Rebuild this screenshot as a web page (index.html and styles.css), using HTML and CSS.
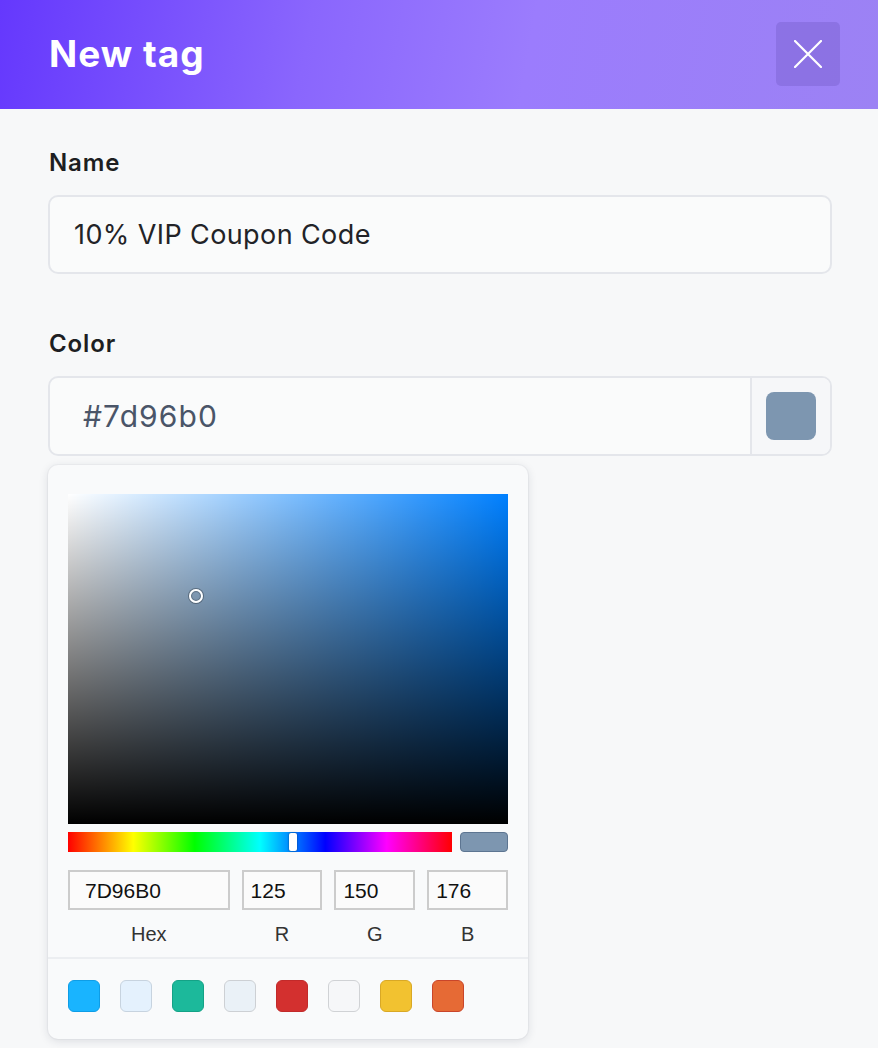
FILE: index.html
```html
<!DOCTYPE html>
<html lang="en">
<head>
<meta charset="utf-8">
<title>New tag</title>
<link rel="stylesheet" href="styles.css">
</head>
<body>
<header class="modal-header">
  <h1 class="title">New tag</h1>
  <button class="close" aria-label="Close">
    <svg width="28" height="28" viewBox="0 0 28 28"><path d="M1 1 L27 27 M27 1 L1 27" stroke="#fff" stroke-width="2.2" stroke-linecap="round" fill="none"/></svg>
  </button>
</header>
<main class="content">
  <div class="field">
    <label class="label">Name</label>
    <div class="input name-input">10% VIP Coupon Code</div>
  </div>
  <div class="field color-field">
    <label class="label">Color</label>
    <div class="input color-input">
      <span class="color-text">#7d96b0</span>
      <span class="color-side"><span class="color-chip"></span></span>
    </div>
    <div class="picker">
      <div class="saturation">
        <div class="sat-white"></div>
        <div class="sat-black"></div>
        <span class="pointer"></span>
      </div>
      <div class="hue-row">
        <div class="hue"><span class="hue-thumb"></span></div>
        <div class="preview"></div>
      </div>
      <div class="fields">
        <div class="f hex"><div class="box">7D96B0</div><div class="cap">Hex</div></div>
        <div class="f"><div class="box num">125</div><div class="cap">R</div></div>
        <div class="f"><div class="box num">150</div><div class="cap">G</div></div>
        <div class="f"><div class="box num">176</div><div class="cap">B</div></div>
      </div>
      <div class="swatches">
        <span class="sw s1"></span>
        <span class="sw s2"></span>
        <span class="sw s3"></span>
        <span class="sw s4"></span>
        <span class="sw s5"></span>
        <span class="sw s6"></span>
        <span class="sw s7"></span>
        <span class="sw s8"></span>
      </div>
    </div>
  </div>
</main>
</body>
</html>
```
FILE: styles.css
```css
* { box-sizing: border-box; }
html, body { margin: 0; padding: 0; }
body {
  background: #f7f8f9;
  font-family: Inter, "Noto Sans", sans-serif;
  color: #1f2024;
  width: 878px;
  height: 1048px;
  overflow: hidden;
}
.modal-header {
  height: 109px;
  display: flex;
  align-items: center;
  justify-content: space-between;
  padding: 0 38px 0 49px;
  background: linear-gradient(100deg, #6538fd 0%, #8a66fd 35%, #9b7cfd 60%, #9c82f4 100%);
}
.title {
  margin: 0;
  color: #fff;
  font-size: 37px;
  font-weight: 700;
  letter-spacing: 1px;
  line-height: 1;
  padding-bottom: 2px;
}
.close {
  width: 64px;
  height: 64px;
  border: 0;
  border-radius: 5px;
  background: rgba(70, 50, 150, 0.18);
  display: flex;
  align-items: center;
  justify-content: center;
  padding: 0;
  margin-top: -2px;
}
.content {
  padding: 41px 46px 0 48px;
}
.field { display: flex; flex-direction: column; }
.color-field { margin-top: 57px; }
.label {
  font-size: 24px;
  font-weight: 600;
  line-height: 26px;
  letter-spacing: 0.9px;
  color: #1d1e22;
  padding-left: 1px;
  margin-bottom: 19px;
}
.input {
  height: 79px;
  border: 2px solid #e4e6eb;
  border-radius: 10px;
  background: #fafbfb;
  display: flex;
  align-items: center;
}
.name-input {
  padding-left: 24px;
  font-size: 27px;
  letter-spacing: 0.4px;
  color: #222327;
  padding-bottom: 1px;
}
.color-input {
  height: 80px;
  padding: 0;
}
.color-text {
  flex: 1;
  padding-left: 33px;
  font-size: 30px;
  letter-spacing: 1.1px;
  color: #4a5568;
  padding-bottom: 1px;
}
.color-side {
  width: 80px;
  height: 100%;
  border-left: 2px solid #e4e6eb;
  display: flex;
  align-items: center;
  justify-content: center;
  background: #f6f7f9;
  border-radius: 0 8px 8px 0;
}
.color-chip {
  width: 50px;
  height: 48px;
  border-radius: 8px;
  background: #7d96b0;
}
.picker {
  margin-top: 9px;
  width: 480px;
  background: #f9fafb;
  border-radius: 10px;
  box-shadow: 0 2px 10px rgba(30, 40, 60, 0.13), 0 0 0 1px rgba(30, 40, 60, 0.03);
  padding-top: 29px;
  font-family: "Liberation Sans", Arial, sans-serif;
}
.saturation {
  position: relative;
  margin: 0 20px;
  height: 330px;
  background: #0080ff;
}
.sat-white, .sat-black {
  position: absolute;
  inset: 0;
}
.sat-white { background: linear-gradient(to right, #fff, rgba(255,255,255,0)); }
.sat-black { background: linear-gradient(to top, #000, rgba(0,0,0,0)); }
.pointer {
  position: absolute;
  left: 121px;
  top: 95px;
  width: 14px;
  height: 14px;
  border-radius: 50%;
  border: 2.5px solid #fff;
  box-shadow: 0 0 0 1px rgba(0,0,0,0.3), inset 0 0 1px 1px rgba(0,0,0,0.3);
}
.hue-row {
  display: flex;
  gap: 8px;
  margin: 8px 20px 0;
  height: 20px;
}
.hue {
  position: relative;
  flex: 1;
  background: linear-gradient(to right, #f00 0%, #ff0 17%, #0f0 33%, #0ff 50%, #00f 67%, #f0f 83%, #f00 100%);
}
.hue-thumb {
  position: absolute;
  left: 221px;
  top: 1px;
  width: 8px;
  height: 18px;
  background: #fff;
  border-radius: 2px;
  box-shadow: 0 0 2px rgba(0,0,0,0.6);
}
.preview {
  width: 48px;
  background: #7d96b0;
  border: 1.5px solid #5d7591;
  border-radius: 4px;
}
.fields {
  display: flex;
  gap: 12px;
  margin: 18px 20px 0;
  padding-bottom: 11px;
}
.f { flex: 1; display: flex; flex-direction: column; }
.f.hex { flex: 2; }
.box {
  height: 40px;
  border: 2px solid #cccccc;
  background: #fbfbfb;
  font-size: 21px;
  color: #111;
  display: flex;
  align-items: center;
  padding-left: 7px;
  padding-top: 1px;
}
.hex .box { padding-left: 15px; }
.cap {
  margin-top: 12px;
  text-align: center;
  font-size: 20px;
  line-height: 24px;
  color: #333;
}
.swatches {
  border-top: 2px solid #eceef1;
  display: flex;
  gap: 20px;
  padding: 21px 20px 27px;
}
.sw {
  width: 32px;
  height: 32px;
  border-radius: 6px;
  border: 1.5px solid;
}
.s1 { background: #19b4ff; border-color: #0e9de6; }
.s2 { background: #e4f1fd; border-color: #c7d3df; }
.s3 { background: #1cb99b; border-color: #14a286; }
.s4 { background: #eaf1f7; border-color: #cdd0d4; }
.s5 { background: #d3302f; border-color: #c22a2a; }
.s6 { background: #f6f7f9; border-color: #d0d2d5; }
.s7 { background: #f2c230; border-color: #d9a825; }
.s8 { background: #e66a35; border-color: #c9452a; }
```
